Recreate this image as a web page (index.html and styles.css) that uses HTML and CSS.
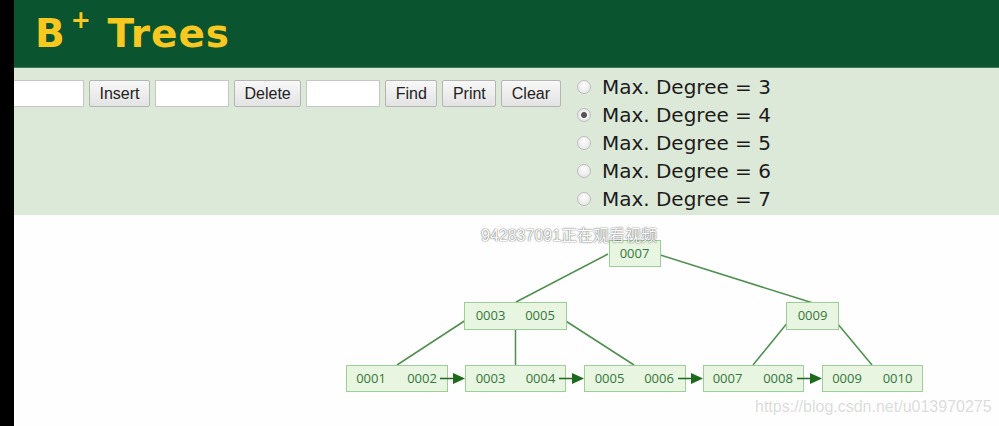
FILE: index.html
```html
<!DOCTYPE html>
<html lang="en">
<head>
    <meta charset="UTF-8">
    <title>B+ Trees</title>
    <link rel="stylesheet" href="styles.css">
</head>
<body>
    <div class="page">
        <!-- Title -->
        <div class="title-bar">
            <h1>B<sup>+</sup> Trees</h1>
        </div>

        <!-- Controls -->
        <div class="controls">
            <div class="actions">
                <input type="text" class="field">
                <button class="btn">Insert</button>
                <input type="text" class="field">
                <button class="btn">Delete</button>
                <input type="text" class="field">
                <button class="btn">Find</button>
                <button class="btn">Print</button>
                <button class="btn">Clear</button>
            </div>
            <div class="degrees">
                <label class="degree"><input type="radio" name="degree" value="3"> Max. Degree = 3</label>
                <label class="degree"><input type="radio" name="degree" value="4" checked> Max. Degree = 4</label>
                <label class="degree"><input type="radio" name="degree" value="5"> Max. Degree = 5</label>
                <label class="degree"><input type="radio" name="degree" value="6"> Max. Degree = 6</label>
                <label class="degree"><input type="radio" name="degree" value="7"> Max. Degree = 7</label>
            </div>
        </div>

        <!-- Tree canvas -->
        <div class="canvas">
            <svg width="985" height="210" viewBox="14 216 985 210">
                <g class="edges">
                    <line x1="608" y1="255" x2="516" y2="303"/>
                    <line x1="654" y1="254" x2="813" y2="304"/>
                    <line x1="472" y1="317" x2="397" y2="366"/>
                    <line x1="515.5" y1="318" x2="515.5" y2="366"/>
                    <line x1="558" y1="317" x2="634" y2="366"/>
                    <line x1="793" y1="317" x2="753" y2="366"/>
                    <line x1="832" y1="318" x2="872" y2="366"/>
                </g>

                <g class="nodes">
                    <rect x="609.5" y="241.5" width="51" height="26"/>
                    <rect x="464.5" y="303.5" width="102" height="27"/>
                    <rect x="786.5" y="303.5" width="52" height="27"/>
                    <rect x="346.5" y="366.5" width="101" height="26"/>
                    <rect x="465.5" y="366.5" width="100" height="26"/>
                    <rect x="584.5" y="366.5" width="101" height="26"/>
                    <rect x="703.5" y="366.5" width="100" height="26"/>
                    <rect x="822.5" y="366.5" width="100" height="26"/>
                </g>

                <g class="links">
                    <line x1="440" y1="379.5" x2="455" y2="379.5"/>
                    <polygon points="453,374 465,379.5 453,385"/>
                    <line x1="559" y1="379.5" x2="574" y2="379.5"/>
                    <polygon points="572,374 584,379.5 572,385"/>
                    <line x1="678" y1="379.5" x2="693" y2="379.5"/>
                    <polygon points="691,374 703,379.5 691,385"/>
                    <line x1="797" y1="379.5" x2="812" y2="379.5"/>
                    <polygon points="810,374 822,379.5 810,385"/>
                </g>

                <g class="keys">
                    <text x="634.5" y="259">0007</text>
                    <text x="490.5" y="321">0003</text>
                    <text x="540" y="321">0005</text>
                    <text x="812.5" y="321">0009</text>
                    <text x="371" y="384">0001</text>
                    <text x="422" y="384">0002</text>
                    <text x="490.5" y="384">0003</text>
                    <text x="540.5" y="384">0004</text>
                    <text x="609.5" y="384">0005</text>
                    <text x="659" y="384">0006</text>
                    <text x="727.5" y="384">0007</text>
                    <text x="778" y="384">0008</text>
                    <text x="847" y="384">0009</text>
                    <text x="897.5" y="384">0010</text>
                </g>
            </svg>
        </div>

        <div class="watching">942837091正在观看视频</div>
        <div class="blog-url">https://blog.csdn.net/u013970275</div>
    </div>
</body>
</html>
```

FILE: styles.css
```css
/* Page */
body {
    margin: 0;
    background-color: #000000; /* black strip on the left */
    font-family: "Liberation Sans", Arial, sans-serif;
}

.page {
    position: relative;
    margin-left: 14px;
    height: 426px;
    background-color: #fdfefd;
    overflow: hidden;
}

/* Title bar */
.title-bar {
    height: 67px;
    background-color: #0a5430;
    border-bottom: 1px solid #3f7b57;
}

.title-bar h1 {
    margin: 0;
    padding-left: 21px;
    font-family: "DejaVu Sans", Verdana, sans-serif;
    font-size: 39px;
    font-weight: bold;
    line-height: 67px;
    letter-spacing: 1px;
    color: #f7c81f;
}

.title-bar sup {
    font-size: 24px;
    vertical-align: 19px;
    line-height: 0;
    margin-left: 5px;
    margin-right: 2px;
    letter-spacing: 0;
}

/* Controls */
.controls {
    display: flex;
    height: 147px;
    background-color: #dde9d8;
}

.actions {
    display: flex;
    align-items: flex-start;
    gap: 5px;
    margin-left: -4px;
    padding-top: 12px;
}

.field {
    width: 74px;
    height: 27px;
    box-sizing: border-box;
    margin: 0;
    border: 1px solid #c3c8c3;
    background-color: #ffffff;
}

.btn {
    height: 27px;
    margin: 0;
    padding: 0 9.5px;
    font-family: "Liberation Sans", Arial, sans-serif;
    font-size: 16px;
    color: #222222;
    border: 1px solid #b4b6b4;
    border-radius: 2px;
    background: linear-gradient(#f8f8f8, #e3e3e3);
}

.degrees {
    margin-left: 15px;
    padding-top: 5px;
}

.degree {
    display: flex;
    align-items: center;
    height: 28px;
    font-family: "DejaVu Sans", Verdana, sans-serif;
    font-size: 20px;
    color: #1c1c1c;
    white-space: pre;
}

.degree input {
    appearance: none;
    width: 14px;
    height: 14px;
    margin: 0 5px 0 1px;
    border: 1px solid #bdbdbd;
    border-radius: 50%;
    background: radial-gradient(circle at 50% 35%, #ffffff, #e0e0e0);
}

.degree input:checked {
    background: radial-gradient(circle, #555555 0, #555555 2.5px, #f2f2f2 3.5px, #dedede);
}

/* Tree */
.canvas svg {
    display: block;
}

.edges line {
    stroke: #4f8f4f;
    stroke-width: 1.5;
}

.nodes rect {
    fill: #e7f5e1;
    stroke: #9ccf97;
    stroke-width: 1;
}

.links line {
    stroke: #1d6a1d;
    stroke-width: 1.5;
}

.links polygon {
    fill: #1d6a1d;
}

.keys text {
    font-family: "Open Sans", sans-serif;
    font-size: 13px;
    fill: #37773a;
    text-anchor: middle;
}

/* Watermarks over the picture */
.watching {
    position: absolute;
    left: 467px;
    top: 228px;
    font-family: "Liberation Sans", "Noto Sans CJK SC", sans-serif;
    font-size: 16px;
    line-height: 16px;
    color: #ffffff;
    text-shadow: 0 0 1px rgba(0, 0, 0, 0.6), 0 0 2px rgba(0, 0, 0, 0.4);
}

.blog-url {
    position: absolute;
    left: 741px;
    top: 398px;
    font-family: "Liberation Sans", Arial, sans-serif;
    font-size: 16px;
    color: rgba(190, 190, 190, 0.55);
}
```
